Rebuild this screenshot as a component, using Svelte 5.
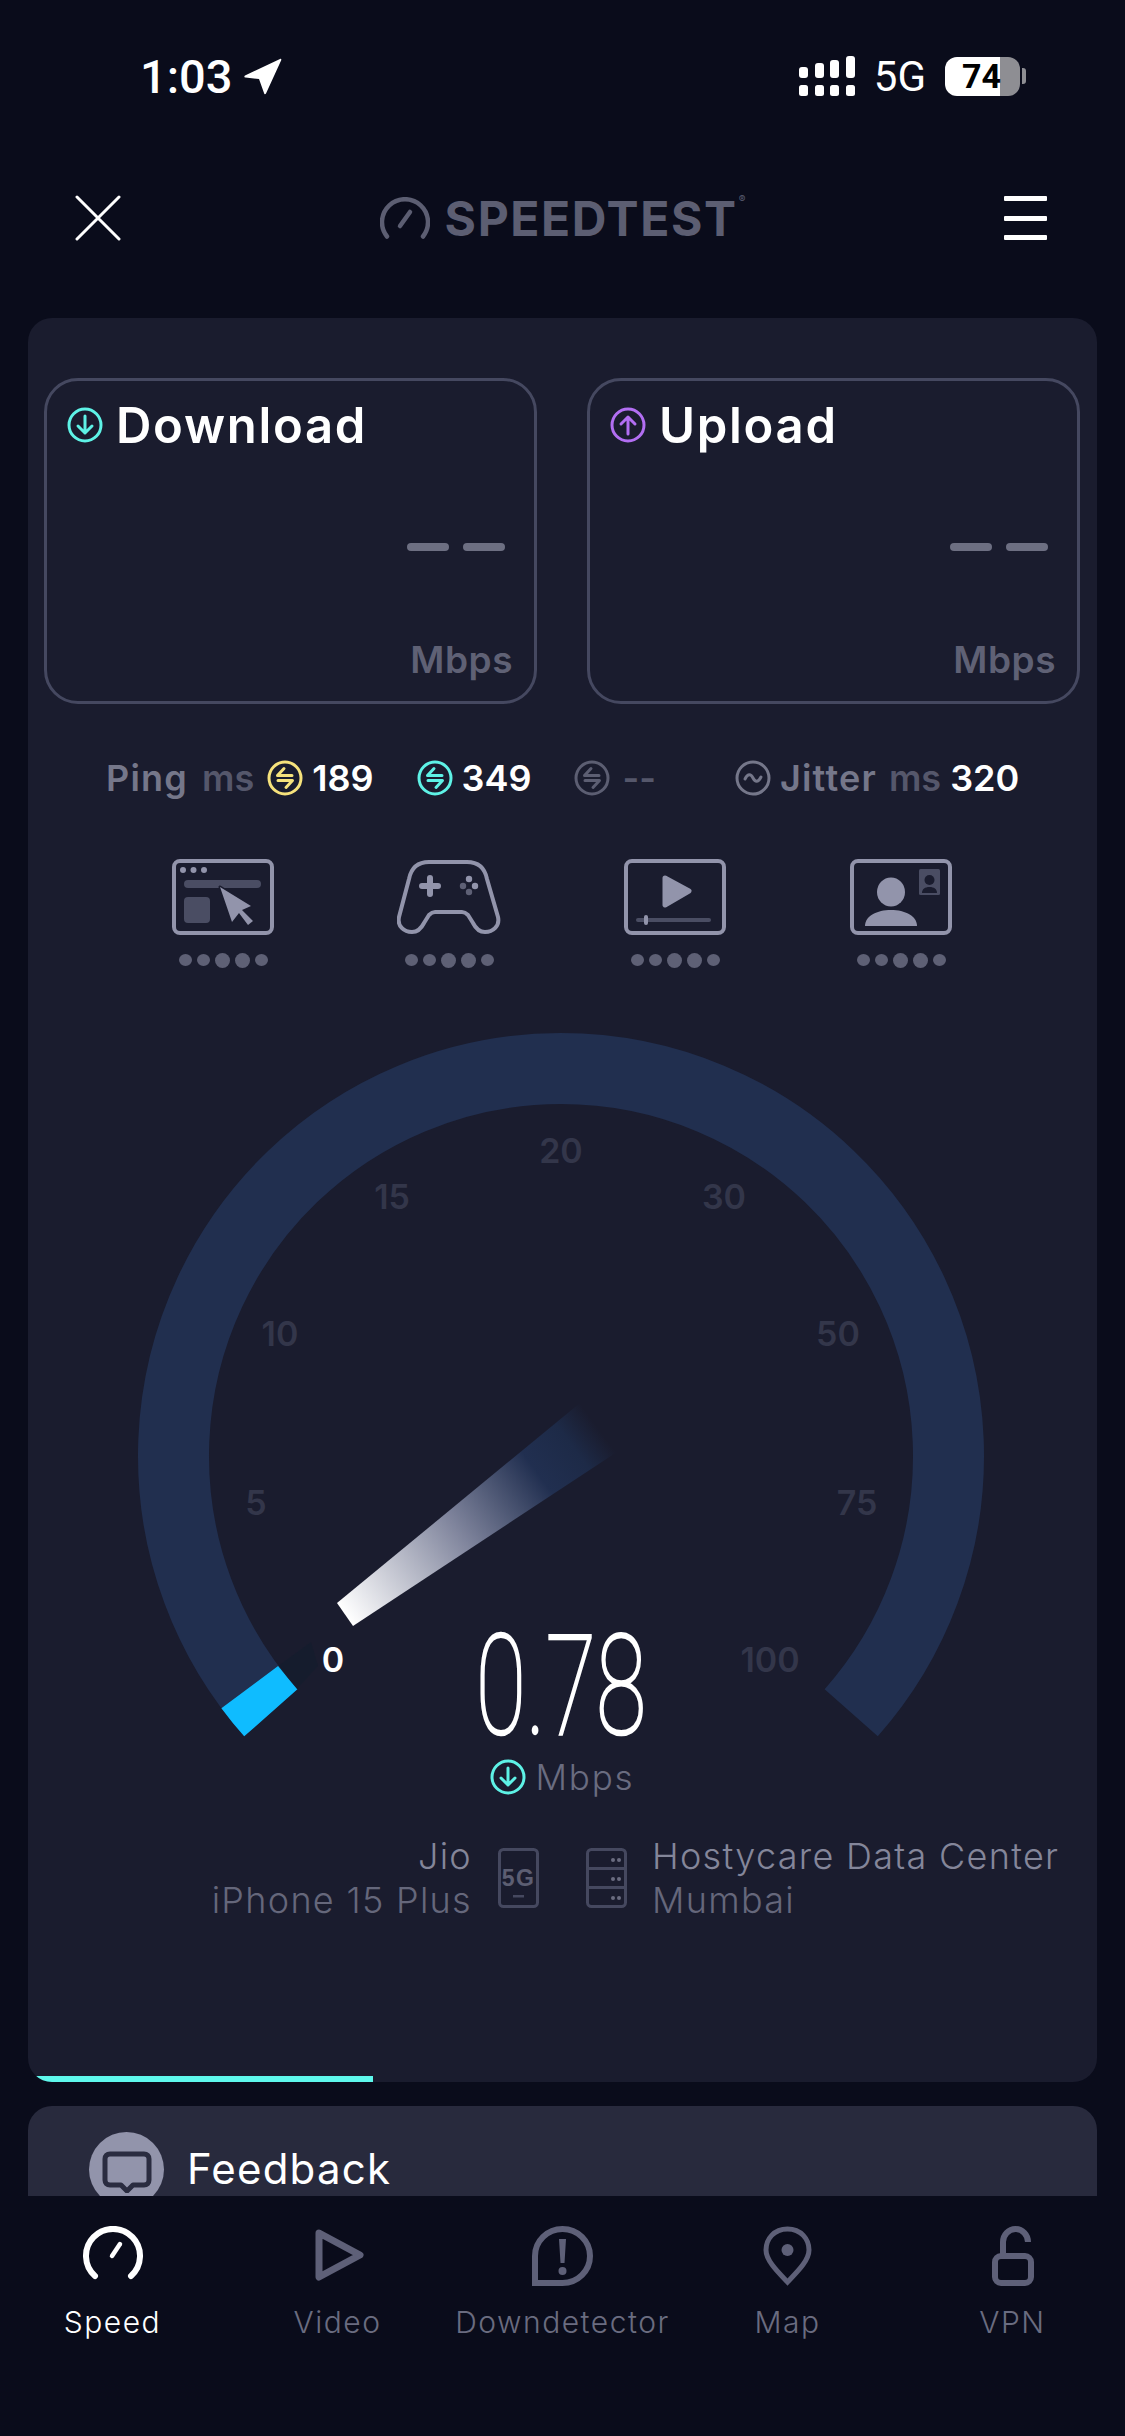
<script>
  const ticks = [
    { label: '0', x: -228, y: 216, active: true },
    { label: '5', x: -305, y: 59 },
    { label: '10', x: -281, y: -110 },
    { label: '15', x: -169, y: -247 },
    { label: '20', x: 0, y: -293 },
    { label: '30', x: 163, y: -247 },
    { label: '50', x: 277, y: -110 },
    { label: '75', x: 296, y: 59 },
    { label: '100', x: 209, y: 216 },
  ];

  const tabs = [
    { id: 'speed', label: 'Speed', active: true },
    { id: 'video', label: 'Video' },
    { id: 'down', label: 'Downdetector' },
    { id: 'map', label: 'Map' },
    { id: 'vpn', label: 'VPN' },
  ];

  const dots = [0, 1, 2, 3, 4];

  // angle is measured below the horizontal, side -1 = left, 1 = right
  function pt(r, deg, side) {
    const a = (deg * Math.PI) / 180;
    return `${(side * r * Math.cos(a)).toFixed(1)} ${(r * Math.sin(a)).toFixed(1)}`;
  }

  const R = 387.5;
  const ring = `M${pt(R, 41.5, -1)} A${R} ${R} 0 1 1 ${pt(R, 41.5, 1)}`;
  const startSeg = `M${pt(R, 41.5, -1)} A${R} ${R} 0 0 1 ${pt(R, 36.6, -1)}`;
</script>

{#snippet downIcon(size)}
  <svg class="round" width={size} height={size} viewBox="0 0 36 36" fill="none" stroke="#5ef2e6" stroke-width="3" stroke-linecap="round" stroke-linejoin="round">
    <circle cx="18" cy="18" r="16" />
    <path d="M18 9v17M11 19l7 7 7-7" />
  </svg>
{/snippet}

{#snippet pingIcon(color)}
  <svg class="round" width="36" height="36" viewBox="0 0 36 36" fill="none" stroke={color} stroke-width="3" stroke-linecap="round" stroke-linejoin="round">
    <circle cx="18" cy="18" r="16" />
    <path d="M25 15.5H10.5L17 8.5M11 20.5h14.5L19 27.5" />
  </svg>
{/snippet}

{#snippet qualityDots()}
  <div class="dots">
    {#each dots as d}
      <span class="dot" class:big={d === 2 || d === 3}></span>
    {/each}
  </div>
{/snippet}

<div class="screen">
  <div class="status">
    <div class="time">
      <span>1:03</span>
      <svg width="38" height="37" viewBox="0 0 38 37"><path d="M1 17.500 36 1c1-.4 1.600.2 1.200 1.200L22 35.500c-.6 1.200-1.800 1-1.900-.3L15 21 1.500 19.500c-1.300 0-1.500-1.500-.5-2z" fill="#fff" /></svg>
    </div>
    <div class="status-right">
      <svg width="56" height="40" viewBox="0 0 56 40" fill="#fff">
        <rect x="0" y="11" width="9" height="11" rx="3" />
        <rect x="16" y="7" width="9" height="15" rx="3" />
        <rect x="31" y="4" width="9" height="18" rx="3" />
        <rect x="47" y="0" width="9" height="22" rx="3" />
        <rect x="0" y="29" width="9" height="11" rx="2.500" />
        <rect x="16" y="29" width="9" height="11" rx="2.500" />
        <rect x="31" y="29" width="9" height="11" rx="2.500" />
        <rect x="47" y="29" width="9" height="11" rx="2.500" />
      </svg>
      <span class="net">5G</span>
      <div class="battery"><span>74</span></div>
      <i class="nub"></i>
    </div>
  </div>

  <header class="top">
    <svg class="close" width="46" height="46" viewBox="0 0 46 46" stroke="#fff" stroke-width="3" stroke-linecap="round">
      <path d="M2 2l42 42M44 2 2 44" />
    </svg>
    <div class="logo">
      <svg width="50" height="42" viewBox="0 0 50 42" fill="none" stroke="#5c5e72" stroke-width="4.500" stroke-linecap="round">
        <path d="M7 39.500A23 23 0 1 1 43 39.500" />
        <path d="M20 29l10-14" />
      </svg>
      <span class="wordmark">SPEEDTEST</span><sup>®</sup>
    </div>
    <div class="menu"><i></i><i></i><i></i></div>
  </header>

  <main class="content">
    <section class="card">
      <div class="tiles">
        <div class="tile">
          <div class="tile-head">
            {@render downIcon(36)}
            <span>Download</span>
          </div>
          <div class="dashes"><i></i><i></i></div>
          <div class="unit">Mbps</div>
        </div>
        <div class="tile">
          <div class="tile-head">
            <svg class="round" width="36" height="36" viewBox="0 0 36 36" fill="none" stroke="#b26ef2" stroke-width="3" stroke-linecap="round" stroke-linejoin="round">
              <circle cx="18" cy="18" r="16" />
              <path d="M18 27V10M11 17l7-7 7 7" />
            </svg>
            <span>Upload</span>
          </div>
          <div class="dashes"><i></i><i></i></div>
          <div class="unit">Mbps</div>
        </div>
      </div>

      <div class="ping-row">
        <span class="lbl">Ping</span>
        <span class="ms">ms</span>
        {@render pingIcon('#f6e27c')}
        <b class="val">189</b>
        {@render pingIcon('#5ef2e6')}
        <b class="val">349</b>
        {@render pingIcon('#5c5e72')}
        <span class="ms dash">--</span>
        <svg class="round" width="36" height="36" viewBox="0 0 36 36" fill="none" stroke="#75778a" stroke-width="3" stroke-linecap="round">
          <circle cx="18" cy="18" r="16" />
          <path d="M10 19c3-6 6-5 8-1s5 5 8-1" />
        </svg>
        <span class="lbl jitter">Jitter</span>
        <span class="ms last">ms</span>
        <b class="val">320</b>
      </div>

      <div class="quality">
        <div class="q">
          <svg width="102" height="76" viewBox="0 0 102 76">
            <rect x="2" y="2" width="98" height="72" rx="6" fill="none" stroke="#9294ab" stroke-width="4" />
            <g fill="#9294ab"><circle cx="11" cy="11" r="3" /><circle cx="21.500" cy="11" r="3" /><circle cx="32" cy="11" r="3" /></g>
            <rect x="12" y="21" width="77" height="8" rx="4" fill="#4a4d63" />
            <rect x="12" y="38" width="26" height="26" rx="4" fill="#4a4d63" />
            <path d="M48 28 79 47 70 51 81 62 76 66 67 54 60 63Z" fill="#9294ab" stroke="#1a1c2e" stroke-width="3" stroke-linejoin="round" paint-order="stroke" />
          </svg>
          {@render qualityDots()}
        </div>
        <div class="q">
          <svg width="104" height="76" viewBox="0 0 104 76">
            <path d="M32 3H70C82 3 88 10 90 20L101 58C103 67 96 73 88 73 82 73 79 70 76 64L71 56C69 54 67 53 65 53H38C36 53 34 54 32 56L27 64C24 70 21 73 15 73 7 73 0 67 2 58L12 20C14 10 20 3 32 3Z" fill="none" stroke="#9294ab" stroke-width="4" />
            <path d="M33 19v16M25 27h16" stroke="#9294ab" stroke-width="6" stroke-linecap="round" />
            <circle cx="72" cy="20" r="3.200" fill="#9294ab" /><circle cx="78" cy="27" r="3.200" fill="#9294ab" />
            <circle cx="72" cy="33" r="3.200" fill="#5e6075" /><circle cx="66" cy="27" r="3.200" fill="#5e6075" />
          </svg>
          {@render qualityDots()}
        </div>
        <div class="q">
          <svg width="102" height="76" viewBox="0 0 102 76">
            <rect x="2" y="2" width="98" height="72" rx="6" fill="none" stroke="#9294ab" stroke-width="4" />
            <path d="M41 19 65 32 41 46Z" fill="#9294ab" stroke="#9294ab" stroke-width="5" stroke-linejoin="round" />
            <rect x="12" y="59" width="75" height="4" rx="2" fill="#4a4d63" />
            <rect x="20" y="56" width="4" height="10" rx="2" fill="#9294ab" />
          </svg>
          {@render qualityDots()}
        </div>
        <div class="q">
          <svg width="102" height="76" viewBox="0 0 102 76">
            <rect x="2" y="2" width="98" height="72" rx="6" fill="none" stroke="#9294ab" stroke-width="4" />
            <ellipse cx="41" cy="33" rx="14" ry="14.500" fill="#9294ab" />
            <path d="M15 67C15 57 27 51 41 51s26 6 26 16Z" fill="#9294ab" />
            <rect x="69" y="10" width="21" height="26" rx="1.500" fill="#4a4d63" />
            <circle cx="79.500" cy="21" r="5" fill="#1a1c2e" />
            <path d="M72 34c0-4 3-6 7.500-6s7.500 2 7.500 6Z" fill="#1a1c2e" />
          </svg>
          {@render qualityDots()}
        </div>
      </div>

      <svg class="gauge" width="1036" height="730" viewBox="-517 -440 1036 730">
        <defs>
          <linearGradient id="needle" gradientUnits="userSpaceOnUse" x1="-216" y1="158" x2="37" y2="-28">
            <stop offset="0" stop-color="#ffffff" />
            <stop offset="0.45" stop-color="#7f849c" />
            <stop offset="0.76" stop-color="#212f50" />
            <stop offset="0.9" stop-color="#1d2a47" />
            <stop offset="1" stop-color="#1a1c2e" />
          </linearGradient>
        </defs>
        <path d={ring} fill="none" stroke="#212f4f" stroke-width="71" />
        <path d={startSeg} fill="none" stroke="#0fbcff" stroke-width="71" />
        <path d="M-283 210-264 233-243 210-250 186Z" fill="#141c2e" opacity="0.7" />
        <path d="M-224 147-208 170 56-4 19-53Z" fill="url(#needle)" />
        {#each ticks as t}
          <text class="tick" class:active={t.active} x={t.x} y={t.y} text-anchor="middle">{t.label}</text>
        {/each}
        <text class="reading" text-anchor="middle" transform="translate(0 278) scale(0.66 1)">0.78</text>
      </svg>

      <div class="speed-unit">
        {@render downIcon(36)}
        <span>Mbps</span>
      </div>

      <div class="endpoints">
        <div class="side client">
          <div class="name">Jio</div>
          <div class="sub">iPhone 15 Plus</div>
        </div>
        <svg class="ep-icon" width="41" height="60" viewBox="0 0 41 60">
          <rect x="1.500" y="1.500" width="38" height="57" rx="4" fill="none" stroke="#45485f" stroke-width="3" />
          <text class="fiveg" x="20.500" y="38" text-anchor="middle">5G</text>
          <rect x="15" y="47" width="11" height="2.500" fill="#45485f" />
        </svg>
        <svg class="ep-icon server" width="41" height="60" viewBox="0 0 41 60" fill="none" stroke="#45485f" stroke-width="3">
          <rect x="1.500" y="1.500" width="38" height="57" rx="4" />
          <path d="M1.500 20.500h38M1.500 39.500h38" />
          <g fill="#6a6c80" stroke="none">
            <circle cx="27" cy="12" r="2" /><circle cx="33" cy="12" r="2" />
            <circle cx="27" cy="31" r="2" /><circle cx="33" cy="31" r="2" />
            <circle cx="27" cy="50" r="2" /><circle cx="33" cy="50" r="2" />
          </g>
        </svg>
        <div class="side">
          <div class="name">Hostycare Data Center</div>
          <div class="sub">Mumbai</div>
        </div>
      </div>

      <div class="progress"></div>
    </section>

    <section class="feedback">
      <div class="fb-icon">
        <svg width="50" height="42" viewBox="0 0 50 42">
          <path d="M8 3h34c3 0 5 2 5 5v21c0 3-2 5-5 5H31l-6 6-6-6H8c-3 0-5-2-5-5V8c0-3 2-5 5-5Z" fill="none" stroke="#2a2c40" stroke-width="5" stroke-linejoin="round" />
        </svg>
      </div>
      <span>Feedback</span>
    </section>
  </main>

  <nav class="tabs">
    {#each tabs as tab}
      <div class="tab" class:active={tab.active}>
        <div class="tab-icon">
          {#if tab.id === 'speed'}
            <svg width="60" height="54" viewBox="0 0 60 54" fill="none" stroke="#fff" stroke-width="6" stroke-linecap="round">
              <path d="M12 50A27 27 0 1 1 48 50" />
              <path d="M29 30l8-12" stroke-width="4.500" />
            </svg>
          {:else if tab.id === 'video'}
            <svg class="play" width="50" height="54" viewBox="0 0 50 54" fill="none" stroke="#5e6078" stroke-width="7" stroke-linejoin="round">
              <path d="M4 5 45 27 4 49Z" />
            </svg>
          {:else if tab.id === 'down'}
            <svg width="61" height="60" viewBox="0 0 61 60">
              <path d="M3 57V30A27.500 27 0 0 1 58 30 27.500 27 0 0 1 30.500 57Z" fill="none" stroke="#5e6078" stroke-width="6" />
              <path d="M27 13h7l-1.500 24h-4Z" fill="#5e6078" />
              <circle cx="30.500" cy="45" r="4" fill="#5e6078" />
            </svg>
          {:else if tab.id === 'map'}
            <svg width="49" height="60" viewBox="0 0 49 60">
              <path d="M24.500 3C11 3 3 13 3 24 3 35 16 47 24.500 56 33 47 46 35 46 24 46 13 38 3 24.500 3Z" fill="none" stroke="#5e6078" stroke-width="5" />
              <circle cx="24.500" cy="24" r="6" fill="#5e6078" />
            </svg>
          {:else}
            <svg width="42" height="60" viewBox="0 0 42 60" fill="none" stroke="#5e6078" stroke-width="6">
              <rect x="3" y="30" width="36" height="27" rx="6" />
              <path d="M11 30V16A12.500 13 0 0 1 36 16" />
            </svg>
          {/if}
        </div>
        <span>{tab.label}</span>
      </div>
    {/each}
  </nav>
</div>

<style>
  :global(body) {
    margin: 0;
    background: #0a0c1b;
  }

  .screen {
    width: 1125px;
    height: 2436px;
    display: flex;
    flex-direction: column;
    overflow: hidden;
    background: #0a0c1b;
    color: #fff;
    font-family: Inter, 'Liberation Sans', sans-serif;
  }

  /* status bar */
  .status {
    height: 152px;
    flex: none;
    display: flex;
    justify-content: space-between;
    align-items: center;
    padding: 0 99px 0 140px;
    font-family: Roboto, 'Liberation Sans', sans-serif;
  }

  .time {
    display: flex;
    align-items: center;
    gap: 11px;
    font-size: 47px;
    font-weight: 500;
  }

  .status-right {
    display: flex;
    align-items: center;
  }

  .net {
    font-size: 42px;
    font-weight: 400;
    margin: 0 19px;
  }

  .battery {
    width: 75px;
    height: 39px;
    border-radius: 12px;
    background: linear-gradient(90deg, #fff 73%, #8e8e93 73%);
    color: #000;
    font-size: 34px;
    font-weight: 700;
    line-height: 39px;
    padding-left: 17px;
    box-sizing: border-box;
  }

  .nub {
    width: 4px;
    height: 16px;
    margin-left: 2px;
    border-radius: 0 3px 3px 0;
    background: #8e8e93;
  }

  /* app header */
  .top {
    height: 132px;
    flex: none;
    margin-bottom: 34px;
    padding: 0 78px 0 75px;
    display: flex;
    align-items: center;
    justify-content: space-between;
  }

  .logo {
    display: flex;
    align-items: center;
    color: #5c5e72;
  }

  .wordmark {
    font-size: 48px;
    font-weight: 700;
    margin-left: 15px;
    letter-spacing: 1.6px;
  }

  .logo sup {
    font-size: 10px;
    align-self: flex-start;
    margin: 4px 0 0 1px;
  }

  .menu {
    width: 43px;
    display: flex;
    flex-direction: column;
    gap: 14.500px;
  }

  .menu i {
    height: 5px;
    border-radius: 1px;
    background: #fff;
  }

  .content {
    flex: 1;
    min-height: 0;
    overflow: hidden;
    padding: 0 28px;
  }

  /* main card */
  .card {
    position: relative;
    height: 1764px;
    box-sizing: border-box;
    padding: 60px 17px 0 16px;
    background: #1a1c2e;
    border-radius: 24px;
    overflow: hidden;
  }

  .tiles {
    display: grid;
    grid-template-columns: 1fr 1fr;
    gap: 50px;
  }

  .tile {
    height: 326px;
    box-sizing: border-box;
    border: 3px solid #454860;
    border-radius: 34px;
    padding: 17px 22px 0 20px;
    display: flex;
    flex-direction: column;
    align-items: flex-end;
  }

  .tile-head {
    align-self: flex-start;
    display: flex;
    align-items: center;
    gap: 13px;
    height: 54px;
    font-size: 49px;
    font-weight: 600;
    letter-spacing: 1.700px;
  }

  .round {
    flex: none;
  }

  .dashes {
    display: flex;
    gap: 14px;
    margin: 91px 7px 0 0;
  }

  .dashes i {
    width: 42px;
    height: 8px;
    border-radius: 4px;
    background: #6d6f82;
  }

  .unit {
    margin-top: 87px;
    margin-right: -1px;
    font-size: 37px;
    line-height: 44px;
    font-weight: 600;
    letter-spacing: 0.500px;
    color: #5f6175;
  }

  .ping-row {
    margin-top: 54px;
    height: 40px;
    padding-left: 62px;
    display: flex;
    align-items: center;
    font-size: 36px;
    font-weight: 600;
  }

  .lbl {
    color: #75778a;
    letter-spacing: 1.200px;
  }

  .jitter {
    margin-left: 9px;
  }

  .ms {
    color: #55576b;
    margin: 0 13px 0 14px;
  }

  .ms.dash {
    margin: 0 79px 0 12px;
  }

  .ms.last {
    margin: 0;
    margin-left: 12px;
  }

  .val {
    font-weight: 600;
    color: #fff;
    margin: 0 43px 0 9px;
  }

  .val:last-child {
    margin-right: 0;
  }

  .quality {
    margin-top: 61px;
    padding-left: 66px;
    display: grid;
    grid-template-columns: repeat(4, 226px);
    justify-items: center;
    justify-content: start;
  }

  .q {
    display: flex;
    flex-direction: column;
    align-items: center;
  }

  .q svg {
    display: block;
  }

  .dots {
    margin-top: 17px;
    display: flex;
    align-items: center;
    gap: 5px;
    height: 16px;
  }

  .dot {
    width: 13px;
    height: 12px;
    border-radius: 50%;
    background: #5e6075;
  }

  .dot.big {
    width: 15px;
    height: 15px;
  }

  .gauge {
    display: block;
    margin-top: 48px;
  }

  .tick {
    font-size: 34px;
    font-weight: 600;
    fill: #33364a;
  }

  .tick.active {
    fill: #fff;
  }

  .reading {
    font-family: Roboto, sans-serif;
    font-size: 139px;
    font-weight: 100;
    fill: #fff;
    stroke: #fff;
    stroke-width: 2.500px;
  }

  .speed-unit {
    margin-top: 10px;
    display: flex;
    justify-content: center;
    align-items: center;
    gap: 10px;
    font-size: 35px;
    font-weight: 300;
    letter-spacing: 1.800px;
    color: #6a6c80;
  }

  .endpoints {
    margin-top: 36px;
    display: flex;
    align-items: center;
    font-size: 36px;
    font-weight: 300;
    line-height: 44px;
    letter-spacing: 1.300px;
  }

  .side .name {
    color: #84869a;
  }

  .side .sub {
    color: #65677b;
  }

  .client {
    width: 428px;
    text-align: right;
  }

  .ep-icon {
    flex: none;
    margin: 0 25px 0 26px;
  }

  .server {
    margin-left: 22px;
  }

  .fiveg {
    font-family: 'Liberation Sans', sans-serif;
    font-size: 23px;
    font-weight: 700;
    fill: #5c5e72;
  }

  .progress {
    position: absolute;
    left: 0;
    bottom: 0;
    width: 345px;
    height: 6px;
    background: #5ef8ec;
  }

  /* next card, clipped by the tab bar */
  .feedback {
    margin-top: 24px;
    height: 120px;
    padding: 26px 0 0 61px;
    box-sizing: border-box;
    background: #282a3d;
    border-radius: 24px 24px 0 0;
    display: flex;
    align-items: flex-start;
    gap: 23px;
    font-size: 42px;
    font-weight: 400;
    letter-spacing: 1.200px;
  }

  .fb-icon {
    width: 75px;
    height: 75px;
    flex: none;
    border-radius: 50%;
    background: #9294ab;
    display: flex;
    align-items: center;
    justify-content: center;
    padding-top: 4px;
    box-sizing: border-box;
  }

  .feedback span {
    line-height: 74px;
  }

  /* tab bar */
  .tabs {
    height: 240px;
    flex: none;
    display: grid;
    grid-template-columns: repeat(5, 225px);
    background: #0a0c1b;
    padding-top: 30px;
    box-sizing: border-box;
  }

  .tab {
    display: flex;
    flex-direction: column;
    align-items: center;
    color: #6a6c80;
    font-size: 30px;
    font-weight: 300;
    letter-spacing: 1.500px;
  }

  .tab.active {
    color: #fff;
  }

  .tab-icon {
    height: 62px;
    display: flex;
    align-items: flex-start;
    margin-bottom: 16px;
  }

  .tab-icon svg {
    display: block;
  }

  .play {
    margin-left: 5px;
    margin-top: 2px;
  }
</style>
